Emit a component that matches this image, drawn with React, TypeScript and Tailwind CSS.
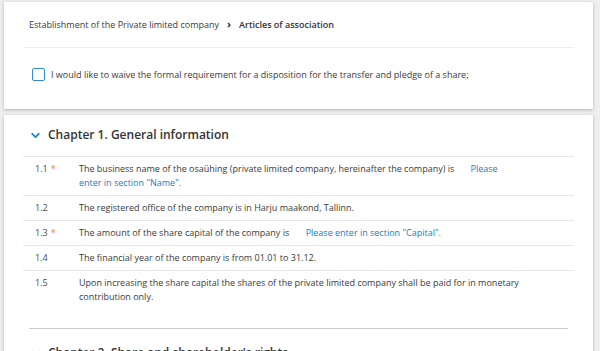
import { ChevronDown } from 'lucide-react'

type Row = {
  num: string
  required?: boolean
  text: string
  link?: string
}

const rows: Row[] = [
  {
    num: '1.1',
    required: true,
    text: 'The business name of the osaühing (private limited company, hereinafter the company) is',
    link: 'Please enter in section "Name".',
  },
  { num: '1.2', text: 'The registered office of the company is in Harju maakond, Tallinn.' },
  {
    num: '1.3',
    required: true,
    text: 'The amount of the share capital of the company is',
    link: 'Please enter in section "Capital".',
  },
  { num: '1.4', text: 'The financial year of the company is from 01.01 to 31.12.' },
  {
    num: '1.5',
    text: 'Upon increasing the share capital the shares of the private limited company shall be paid for in monetary contribution only.',
  },
]

function ArticleRow({ row, last }: { row: Row; last: boolean }) {
  return (
    <div className={`flex py-[5px] leading-[14px] ${last ? '' : 'border-b border-[#e8e8e8]'}`}>
      <div className="w-[56px] shrink-0 pl-[12px] text-[#4a4a4a]">
        {row.num}
        {row.required && <span className="ml-[3px] text-[#f0803c]">*</span>}
      </div>
      <div className="w-[440px] text-[#3a3a3a]">
        {row.text}
        {row.link && (
          <>
            {' '}
            <span className="ml-[14px] text-[#1580c4]">{row.link}</span>
          </>
        )}
      </div>
    </div>
  )
}

export default function App() {
  return (
    <div
      className="h-[351px] w-full overflow-hidden bg-[#eeeeee] pl-[4px] pr-[7px] pt-[2px] text-[9px]"
      style={{ fontFamily: '"Open Sans", "Noto Sans", sans-serif' }}
    >
      <div className="bg-white px-[19px] shadow-[0_1px_3px_rgba(0,0,0,0.25)]">
        <div className="flex h-[45px] items-center pl-[6px] text-[#3a3a3a]">
          <span>Establishment of the Private limited company</span>
          <span className="mx-[8px] text-[11px] font-bold text-[#333]">›</span>
          <span className="font-semibold text-[#333]">Articles of association</span>
        </div>
        <div className="border-t border-[#eeeeee]" />
        <label className="flex items-center pb-[27px] pl-[9px] pt-[20px] text-[#3a3a3a]">
          <span className="h-[13px] w-[13px] shrink-0 rounded-[2px] border-[1.5px] border-[#2e8dd0] bg-white" />
          <span className="ml-[6px]">
            I would like to waive the formal requirement for a disposition for the transfer and pledge of a share;
          </span>
        </label>
      </div>

      <div className="mt-[6px] bg-white px-[19px] pb-[20px] shadow-[0_1px_3px_rgba(0,0,0,0.25)]">
        <div className="flex h-[41px] items-center pl-[6px]">
          <ChevronDown size={13} strokeWidth={3.5} className="text-[#1b87c9]" />
          <h2 className="ml-[6px] text-[12px] font-semibold text-[#333]">Chapter 1. General information</h2>
        </div>
        <div className="border-t border-[#e8e8e8]">
          {rows.map((row, i) => (
            <ArticleRow key={row.num} row={row} last={i === rows.length - 1} />
          ))}
        </div>
        <div className="mx-[6px] mt-[19px] border-t border-[#cccccc]" />
        <div className="mt-[4px] flex h-[41px] items-center pl-[6px]">
          <ChevronDown size={13} strokeWidth={3.5} className="text-[#1b87c9]" />
          <h2 className="ml-[6px] text-[12px] font-semibold text-[#333]">
            Chapter 2. Share and shareholder's rights
          </h2>
        </div>
      </div>
    </div>
  )
}
